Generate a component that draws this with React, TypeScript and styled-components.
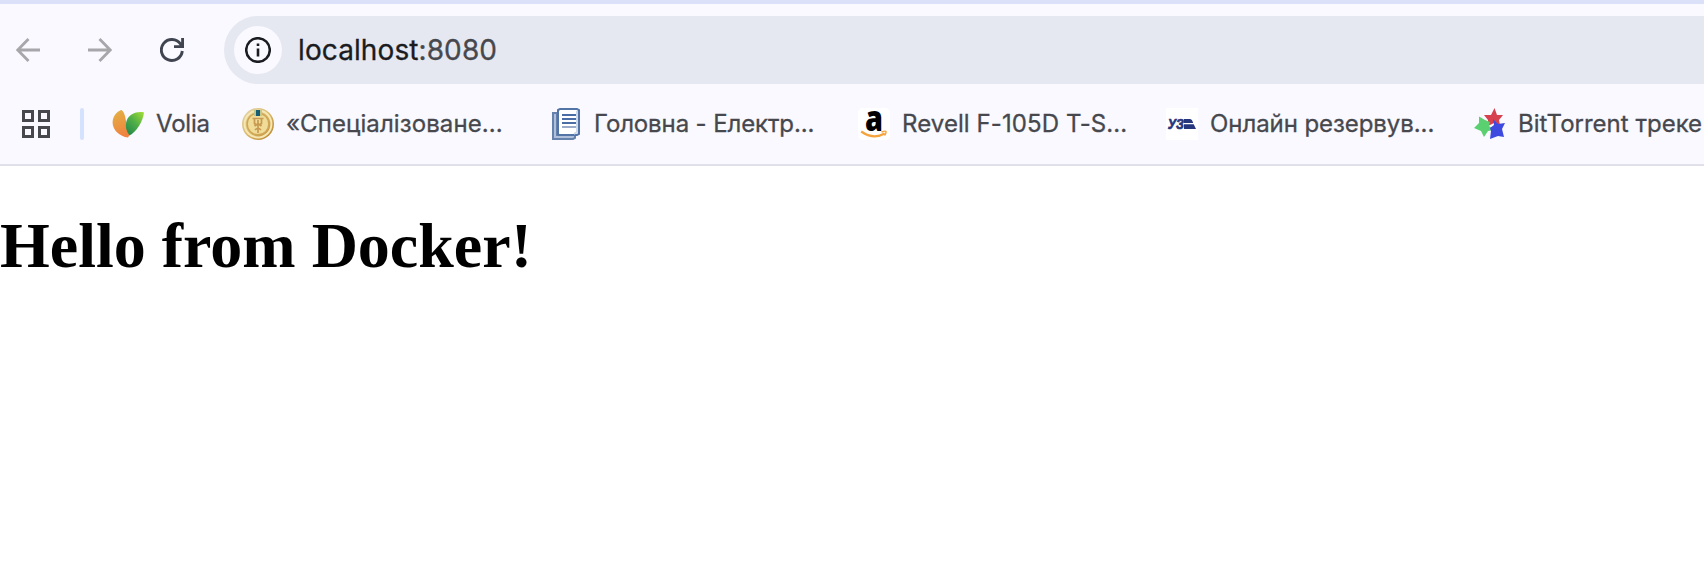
import React from "react";
import styled, { createGlobalStyle } from "styled-components";

const GlobalStyle = createGlobalStyle`
  * { box-sizing: border-box; }
  html, body { margin: 0; background: #fff; overflow: hidden; }
`;

const Window = styled.div`
  width: 100%;
  height: 578px;
  overflow: hidden;
  background: #fff;
  font-family: Inter, "Liberation Sans", sans-serif;
`;

const Chrome = styled.header`
  height: 166px;
  border-top: 4px solid #dae1f8;
  border-bottom: 2px solid #dfe0ea;
  background: #f9f9ff;
`;

const Toolbar = styled.div`
  display: flex;
  align-items: center;
  height: 92px;
`;

const NavButton = styled.button<{ $width: number }>`
  flex: none;
  width: ${(p) => p.$width}px;
  height: 56px;
  padding: 0;
  border: 0;
  background: none;
  display: flex;
  align-items: center;
  justify-content: center;
`;

const Omnibox = styled.div`
  flex: 1;
  display: flex;
  align-items: center;
  height: 68px;
  margin-left: 24px;
  padding-left: 10px;
  border-radius: 34px 0 0 34px;
  background: #e5e8f1;
`;

const SiteInfo = styled.div`
  display: flex;
  align-items: center;
  justify-content: center;
  width: 48px;
  height: 48px;
  border-radius: 50%;
  background: #f9f9ff;
`;

const Address = styled.div`
  margin-left: 16px;
  font-size: 28px;
  line-height: 36px;
  letter-spacing: 0.1px;
  color: #1b1c21;
  white-space: nowrap;
  -webkit-text-stroke: 0.3px currentColor;
`;

const Port = styled.span`
  color: #47484d;
`;

const BookmarkBar = styled.nav`
  display: flex;
  align-items: center;
  height: 56px;
  padding-left: 22px;
`;

const Divider = styled.div`
  flex: none;
  width: 4px;
  height: 32px;
  margin: 0 28px 0 30px;
  border-radius: 2px;
  background: #d5e2fd;
`;

const Bookmark = styled.div<{ $width: number }>`
  flex: none;
  display: flex;
  align-items: center;
  gap: 12px;
  width: ${(p) => p.$width}px;
  height: 56px;
`;

const Label = styled.span<{ $spacing: number }>`
  font-size: 24px;
  line-height: 32px;
  letter-spacing: ${(p) => p.$spacing}px;
  color: #47484d;
  white-space: nowrap;
  -webkit-text-stroke: 0.3px currentColor;
`;

const Heading = styled.h1`
  margin: 43px 0 0;
  font: bold 64px/74px "Liberation Serif", "Times New Roman", serif;
  color: #000;
  white-space: nowrap;
`;

const Icon = styled.svg`
  flex: none;
  display: block;
`;

const VoliaIcon = () => (
  <Icon width="32" height="32" viewBox="0 0 32 32">
    <defs>
      <linearGradient id="orange" x1="0" y1="0" x2="0.3" y2="1">
        <stop offset="0" stopColor="#e3b443" />
        <stop offset="1" stopColor="#ef8340" />
      </linearGradient>
      <linearGradient id="green" x1="1" y1="0" x2="0.2" y2="1">
        <stop offset="0" stopColor="#a5df35" />
        <stop offset="0.5" stopColor="#53b046" />
        <stop offset="1" stopColor="#24894b" />
      </linearGradient>
    </defs>
    <path d="M9 2C4 4 .5 9 .6 15c.2 7 7 13.500 15.400 14.500l2.500-4-4-9.500C13.500 9 12.500 4 9.500 2Z" fill="url(#orange)" />
    <path d="M32 4.500C25 3 17 6 14.500 13c-1.500 5-.5 10 3 14.500C24 24 31 14 32 4.500Z" fill="url(#green)" />
  </Icon>
);

const MedalIcon = () => (
  <Icon width="32" height="32" viewBox="0 0 32 32">
    <defs>
      <linearGradient id="gold" x1="0" y1="0" x2="1" y2="1">
        <stop offset="0" stopColor="#e2d8b4" />
        <stop offset="0.5" stopColor="#dab96b" />
        <stop offset="1" stopColor="#b77d24" />
      </linearGradient>
    </defs>
    <circle cx="16" cy="16" r="16" fill="url(#gold)" />
    <circle cx="16" cy="16" r="13.400" fill="none" stroke="#f6e7b2" strokeWidth="2" />
    <circle cx="16" cy="16" r="10.800" fill="#f0dc98" stroke="#cfa754" strokeWidth="1.400" />
    <path d="M10.500 10.500h11M12.500 11v4.500q3.500 3 7 0V11M12.500 18q3.500-3 7 0M13 22q3-3 6 0M16 12v13" fill="none" stroke="#c69a50" strokeWidth="1.700" />
    <path d="M12 2h8v6h-8z" fill="#c3c888" />
    <path d="M14 2h4v6h-4z" fill="#165d73" />
  </Icon>
);

const PagesIcon = () => (
  <Icon width="32" height="32" viewBox="0 0 32 32">
    <path d="M3 5h4v22h18v3l-2 1H3Z" fill="#b0c0da" stroke="#6482ab" strokeWidth="2" />
    <path d="M8 2l2-1h17l2 1v24l-2 1H9l-1-1Z" fill="#fff" stroke="#5274a7" strokeWidth="2" />
    <path d="M27 3v21l-3 2" fill="none" stroke="#cbd9ea" strokeWidth="2" />
    <path d="M12 7h14M12 11h14M12 15h14" stroke="#4a6da5" strokeWidth="2" />
    <path d="M12 19h14" stroke="#9aabc9" strokeWidth="2" />
  </Icon>
);

const AmazonIcon = () => (
  <Icon width="32" height="32" viewBox="0 0 32 32">
    <rect width="32" height="32" rx="5" fill="#fff" />
    <text x="7" y="22.500" fontFamily="Open Sans, sans-serif" fontWeight="800" fontSize="36" textLength="18" lengthAdjust="spacingAndGlyphs" fill="#000">a</text>
    <path d="M3.200 23.500q12 8.500 23.500 2" fill="none" stroke="#f5a33b" strokeWidth="2.200" />
    <path d="M23.500 24q4-1.500 4.500-.5t-1.500 4" fill="none" stroke="#f5a33b" strokeWidth="1.400" />
  </Icon>
);

const RailIcon = () => (
  <Icon width="32" height="32" viewBox="0 0 32 32">
    <rect width="32" height="32" fill="#fff" />
    <text x="1.800" y="20.500" fontFamily="Liberation Sans, sans-serif" fontWeight="bold" fontStyle="italic" fontSize="14" textLength="16" lengthAdjust="spacingAndGlyphs" fill="#26367d" stroke="#26367d" strokeWidth="0.700">УЗ</text>
    <path d="M18 11h6q1.500 0 2.300 1.700l.9 2.300H18ZM18 16.200h9.700l2.300 4.800H18Z" fill="#26367d" />
  </Icon>
);

const StarsIcon = () => (
  <Icon width="32" height="32" viewBox="0 0 32 32">
    <path d="m20.500 0 2.500 7h6l-4 5 1 5-6-2-6 3V12L10 7h7Z" fill="#d7414f" />
    <path d="M5 8.500l6 3.500 5 2-1 4 5 4-6 1-4 6-3-6-7-3 5-5Z" fill="#5bd070" />
    <path d="m19 11 5 5 7-1-3 6 2 8-6-1-8 3 1-8-1-3 4-3Z" fill="#3e49df" />
  </Icon>
);

const BOOKMARKS = [
  { label: "Volia", icon: <VoliaIcon />, width: 130, spacing: -0.2 },
  { label: "«Спеціалізоване...", icon: <MedalIcon />, width: 308, spacing: 0.1 },
  { label: "Головна - Електр...", icon: <PagesIcon />, width: 308, spacing: -0.12 },
  { label: "Revell F-105D T-S...", icon: <AmazonIcon />, width: 308, spacing: 0.08 },
  { label: "Онлайн резервув...", icon: <RailIcon />, width: 308, spacing: -0.07 },
  { label: "BitTorrent треке", icon: <StarsIcon />, width: 230, spacing: 0 },
];

export default function App() {
  return (
    <Window>
      <GlobalStyle />
      <Chrome>
        <Toolbar>
          <NavButton $width={56} aria-label="Back">
            <Icon width="24" height="24" viewBox="0 0 24 24" fill="none" stroke="#a7a7aa" strokeWidth="2.800">
              <path d="M24 12H2M12.500 1 1.700 12l10.800 11" />
            </Icon>
          </NavButton>
          <NavButton $width={88} aria-label="Forward">
            <Icon width="24" height="24" viewBox="0 0 24 24" fill="none" stroke="#a7a7aa" strokeWidth="2.800">
              <path d="M0 12h22M11.500 1l10.800 11-10.800 11" />
            </Icon>
          </NavButton>
          <NavButton $width={56} aria-label="Reload">
            <Icon width="24" height="24" viewBox="0 0 24 24" fill="none" stroke="#3f4450" strokeWidth="2.900">
              <path d="M22.300 13A10.500 10.500 0 1 1 20.500 6L22.500 8.600M22.600 0v8.600H14" />
            </Icon>
          </NavButton>
          <Omnibox>
            <SiteInfo>
              <Icon width="26" height="26" viewBox="0 0 26 26">
                <circle cx="13" cy="13" r="11.800" fill="none" stroke="#1b1c21" strokeWidth="2.500" />
                <path d="M11.700 6.500h2.600v2.600h-2.600zM11.700 11.500h2.600v8h-2.600z" fill="#1b1c21" />
              </Icon>
            </SiteInfo>
            <Address>
              localhost<Port>:8080</Port>
            </Address>
          </Omnibox>
        </Toolbar>
        <BookmarkBar>
          <Icon width="28" height="28" viewBox="0 0 28 28" fill="none" stroke="#47484d" strokeWidth="3">
            <path d="M1.500 1.500h9v9h-9zM17.500 1.500h9v9h-9zM1.500 17.500h9v9h-9zM17.500 17.500h9v9h-9z" />
          </Icon>
          <Divider />
          {BOOKMARKS.map((b) => (
            <Bookmark key={b.label} $width={b.width}>
              {b.icon}
              <Label $spacing={b.spacing}>{b.label}</Label>
            </Bookmark>
          ))}
        </BookmarkBar>
      </Chrome>
      <Heading>Hello from Docker!</Heading>
    </Window>
  );
}
